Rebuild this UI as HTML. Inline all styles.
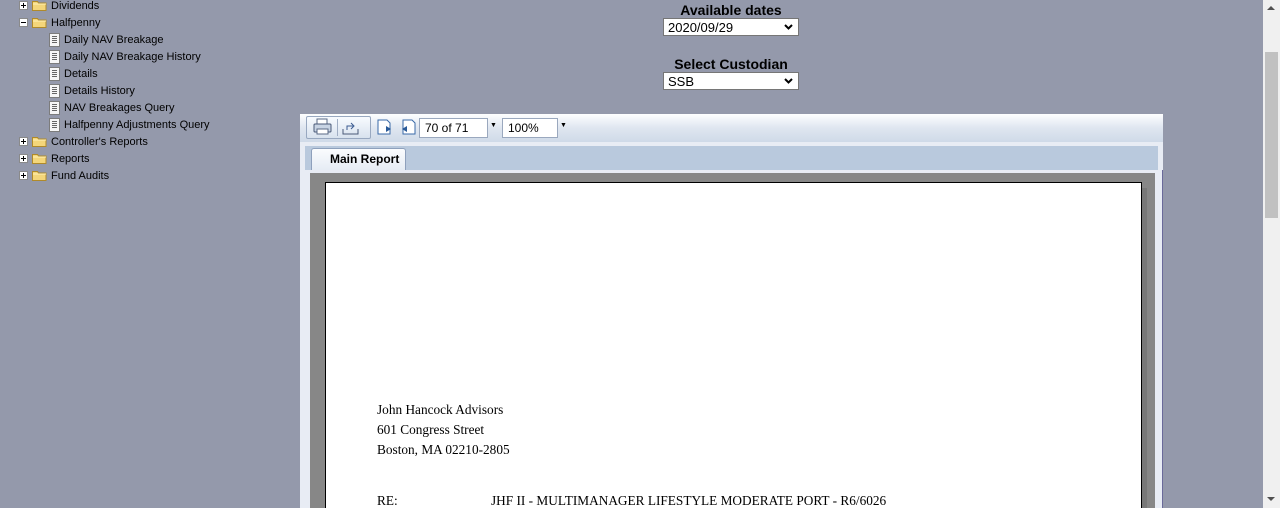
<!DOCTYPE html>
<html style="overflow:hidden;height:508px"><head><style>
html,body{margin:0;}
body{width:1280px;height:508px;background:#9499ab;position:relative;overflow:hidden;font-family:"Liberation Sans",sans-serif;}
.a{position:absolute;}
.t{position:absolute;font-size:11px;color:#000;white-space:nowrap;line-height:13px;}
.pm{position:absolute;width:7px;height:7px;border:1px solid #8a8a8a;background:#fff;}
.pm:before{content:"";position:absolute;left:1px;top:3px;width:5px;height:1px;background:#000;}
.pm.p:after{content:"";position:absolute;left:3px;top:1px;width:1px;height:5px;background:#000;}
.fd{position:absolute;width:15px;height:11px;}
.dc{position:absolute;width:9px;height:12px;background:#f6f6f6;border:1px solid #7c7c7c;}
.dc:before{content:"";position:absolute;left:2px;top:2px;width:5px;height:7px;background:repeating-linear-gradient(#666 0 1px,transparent 1px 2px);}
.lbl{position:absolute;font-weight:bold;font-size:14px;text-align:center;width:200px;}
.sel{position:absolute;width:136px;height:18px;background:#fff;border:1px solid #767676;font-size:13px;line-height:17px;padding-left:4px;box-sizing:border-box;}
.sel svg{position:absolute;right:5px;top:5px;}
.sr{font-family:"Liberation Serif",serif;font-size:13.3px;position:absolute;white-space:nowrap;}
</style></head><body>
<svg width="0" height="0" style="position:absolute"><defs><symbol id="f" viewBox="0 0 15 11"><path d="M0.5 1.5h5l1 1.5h7.5v7.5h-13.5z" fill="#f4d67a" stroke="#b08a2a"/><path d="M1 4h13" stroke="#fff3b8"/></symbol><symbol id="ch" viewBox="0 0 9 6"><path d="M1 1l3.5 3.5L8 1" fill="none" stroke="#000" stroke-width="2"/></symbol></defs></svg>
<div class="pm p" style="left:19px;top:1px"></div><svg class="fd" style="left:32px;top:0"><use href="#f"/></svg><div class="t" style="left:51px;top:0">Dividends</div>
<div class="pm" style="left:19px;top:18px"></div><svg class="fd" style="left:32px;top:17px"><use href="#f"/></svg><div class="t" style="left:51px;top:17px">Halfpenny</div>
<div class="dc" style="left:49px;top:33px"></div><div class="t" style="left:64px;top:34px">Daily NAV Breakage</div>
<div class="dc" style="left:49px;top:50px"></div><div class="t" style="left:64px;top:51px">Daily NAV Breakage History</div>
<div class="dc" style="left:49px;top:67px"></div><div class="t" style="left:64px;top:68px">Details</div>
<div class="dc" style="left:49px;top:84px"></div><div class="t" style="left:64px;top:85px">Details History</div>
<div class="dc" style="left:49px;top:101px"></div><div class="t" style="left:64px;top:102px">NAV Breakages Query</div>
<div class="dc" style="left:49px;top:118px"></div><div class="t" style="left:64px;top:119px">Halfpenny Adjustments Query</div>
<div class="pm p" style="left:19px;top:137px"></div><svg class="fd" style="left:32px;top:136px"><use href="#f"/></svg><div class="t" style="left:51px;top:136px">Controller's Reports</div>
<div class="pm p" style="left:19px;top:154px"></div><svg class="fd" style="left:32px;top:153px"><use href="#f"/></svg><div class="t" style="left:51px;top:153px">Reports</div>
<div class="pm p" style="left:19px;top:171px"></div><svg class="fd" style="left:32px;top:170px"><use href="#f"/></svg><div class="t" style="left:51px;top:170px">Fund Audits</div>
<div class="lbl" style="left:631px;top:2px">Available dates</div>
<div class="sel" style="left:663px;top:18px">2020/09/29<svg width="9" height="6"><use href="#ch"/></svg></div>
<div class="lbl" style="left:631px;top:56px">Select Custodian</div>
<div class="sel" style="left:663px;top:72px">SSB<svg width="9" height="6"><use href="#ch"/></svg></div>
<div class="a" style="left:300px;top:114px;width:863px;height:394px;background:#e8ecf4;"></div>
<div class="a" style="left:300px;top:114px;width:863px;height:28px;background:linear-gradient(#fdfeff,#dfe6f0 50%,#cfdae8);"></div>
<div class="a" style="left:306px;top:116px;width:65px;height:23px;border:1px solid #98a8c0;border-radius:2px;background:linear-gradient(#f8fbff,#d8e2ee);box-sizing:border-box;"></div>
<svg class="a" style="left:313px;top:118px" width="20" height="18"><rect x="4" y="1" width="10" height="6" fill="#fff" stroke="#5a6a86"/><rect x="1" y="6" width="17" height="8" rx="1" fill="#c8d4e4" stroke="#4a5a78"/><rect x="4" y="11" width="11" height="5" fill="#fff" stroke="#5a6a86"/></svg>
<div class="a" style="left:337px;top:119px;width:1px;height:17px;background:#a0aec4"></div>
<svg class="a" style="left:341px;top:118px" width="20" height="18"><path d="M2 11v5h15v-5" fill="none" stroke="#4a5a78"/><path d="M6 12v-4h6M10 5l3 3-3 3" fill="none" stroke="#3a5a90"/></svg>
<svg class="a" style="left:377px;top:118px" width="18" height="18"><path d="M1 2h9l3 3v11h-12z" fill="#fff" stroke="#3a6aa8"/><path d="M9 8l5 3-5 3z" fill="#2a5a98"/></svg>
<svg class="a" style="left:398px;top:118px" width="18" height="18"><path d="M5 2h9l3 3v11h-12z" fill="#fff" stroke="#3a6aa8"/><path d="M9 8l-5 3 5 3z" fill="#2a5a98"/></svg>
<div class="a" style="left:419px;top:118px;width:69px;height:20px;background:#fff;border:1px solid #9aa8be;box-sizing:border-box;font-size:12px;line-height:18px;padding-left:5px">70 of 71</div>
<div class="a" style="left:490px;top:122px;font-size:7px">▼</div>
<div class="a" style="left:502px;top:118px;width:56px;height:20px;background:#fff;border:1px solid #9aa8be;box-sizing:border-box;font-size:12px;line-height:18px;padding-left:5px">100%</div>
<div class="a" style="left:560px;top:122px;font-size:7px">▼</div>
<div class="a" style="left:305px;top:146px;width:853px;height:24px;background:#b9c9dd;"></div>
<div class="a" style="left:311px;top:148px;width:95px;height:22px;background:linear-gradient(#fbfcfe,#e6ecf4);border:1px solid #8ea0bc;border-bottom:none;border-radius:3px 3px 0 0;box-sizing:border-box;font-weight:bold;font-size:12px;line-height:20px;padding-left:18px">Main Report</div>
<div class="a" style="left:310px;top:173px;width:845px;height:335px;background:#878787;"></div>
<div class="a" style="left:1162px;top:170px;width:1px;height:338px;background:#6a6a9a;"></div>
<div class="a" style="left:1142px;top:188px;width:5px;height:320px;background:#6a6a6a;opacity:.5"></div>
<div class="a" style="left:325px;top:182px;width:817px;height:326px;background:#fff;border:1px solid #000;border-bottom:none;box-sizing:border-box;"></div>
<div class="sr" style="left:377px;top:402px">John Hancock Advisors</div>
<div class="sr" style="left:377px;top:422px">601 Congress Street</div>
<div class="sr" style="left:377px;top:442px">Boston, MA 02210-2805</div>
<div class="sr" style="left:377px;top:493px">RE:</div>
<div class="sr" style="left:491px;top:493px">JHF II - MULTIMANAGER LIFESTYLE MODERATE PORT - R6/6026</div>
<div class="a" style="left:1263px;top:0;width:17px;height:508px;background:#f0f0f0"></div>
<div class="a" style="left:1265px;top:52px;width:13px;height:166px;background:#c1c1c1"></div>
<div class="a" style="left:1267px;top:6px;width:0;height:0;border-left:4px solid transparent;border-right:4px solid transparent;border-bottom:4px solid #505050"></div>
<div class="a" style="left:1267px;top:497px;width:0;height:0;border-left:4px solid transparent;border-right:4px solid transparent;border-top:4px solid #505050"></div>
</body></html>
